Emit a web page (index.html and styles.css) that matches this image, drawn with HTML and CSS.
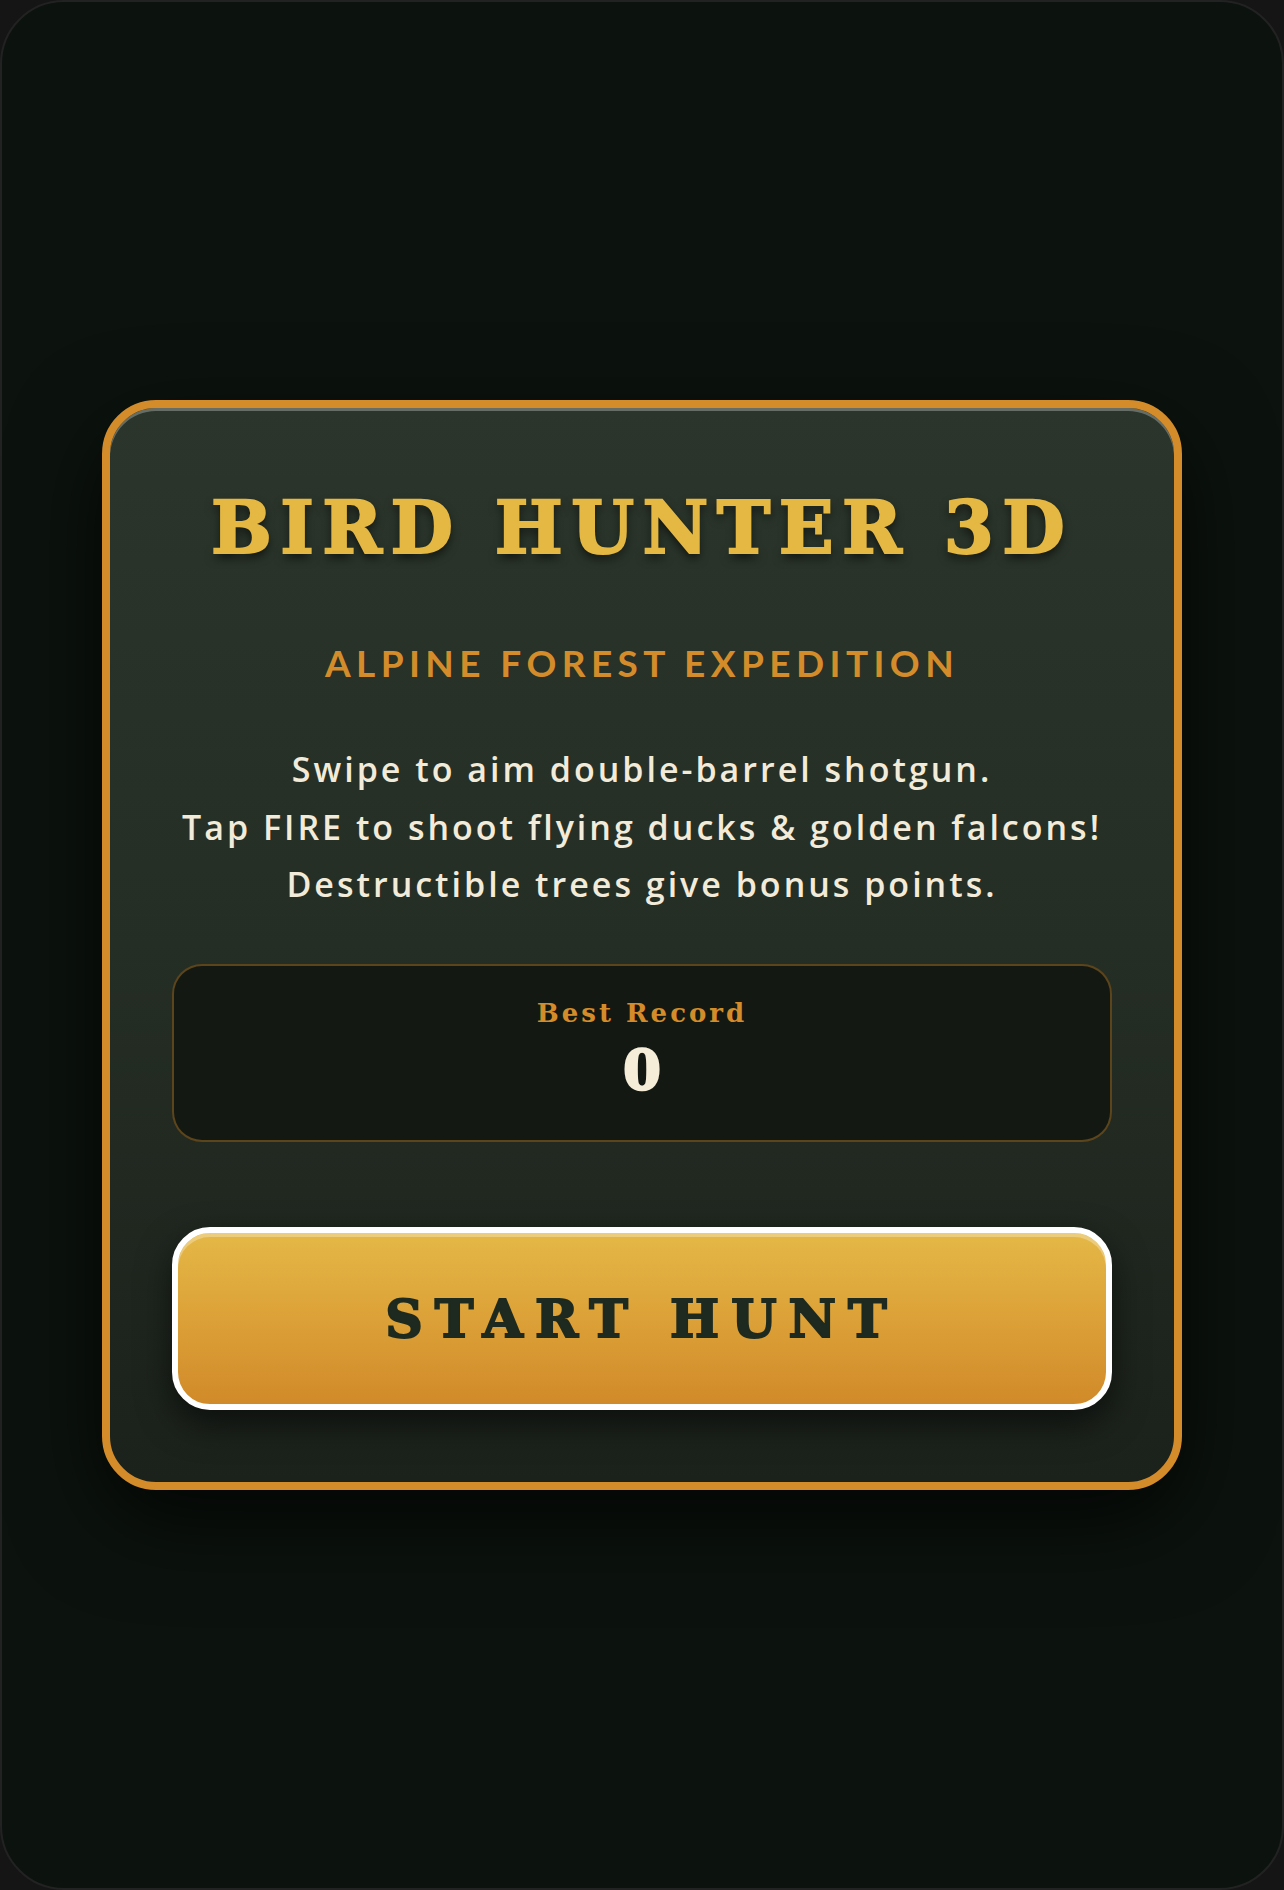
FILE: index.html
```html
<!DOCTYPE html>
<html lang="en">
<head>
<meta charset="utf-8">
<title>Bird Hunter 3D</title>
<link rel="stylesheet" href="styles.css">
</head>
<body>
<div class="screen">
  <div class="card">
    <h1 class="title">BIRD HUNTER 3D</h1>
    <h2 class="subtitle">ALPINE FOREST EXPEDITION</h2>
    <p class="intro">Swipe to aim double-barrel shotgun.<br>Tap FIRE to shoot flying ducks &amp; golden falcons!<br>Destructible trees give bonus points.</p>
    <div class="record">
      <div class="record-label">Best Record</div>
      <div class="record-value">0</div>
    </div>
    <button class="start-btn" type="button">START HUNT</button>
  </div>
</div>
</body>
</html>
```

FILE: styles.css
```css
html, body {
  margin: 0;
  padding: 0;
  background: #151515;
}

.screen {
  box-sizing: border-box;
  width: 1284px;
  height: 1890px;
  border: 2px solid #222222;
  border-radius: 64px;
  background: #0c130e;
  display: flex;
  align-items: center;
  justify-content: center;
}

.card {
  box-sizing: border-box;
  width: 1080px;
  border: 8px solid #d48c2a;
  border-radius: 54px;
  padding: 84px 62px 72px;
  background: linear-gradient(180deg, #2b352b 0%, #252e25 50%, #1b211b 100%);
  box-shadow: inset 0 3px 0 rgba(255, 255, 255, 0.28), 0 30px 90px rgba(0, 0, 0, 0.75);
  display: flex;
  flex-direction: column;
  align-items: center;
  text-align: center;
}

.title {
  margin: 0;
  font-family: "DejaVu Serif", serif;
  font-weight: 700;
  font-size: 72px;
  line-height: 72px;
  letter-spacing: 8.4px;
  color: #e4b843;
  -webkit-text-stroke: 2px #e4b843;
  text-shadow: 0 5px 10px rgba(0, 0, 0, 0.6);
  white-space: nowrap;
}

.subtitle {
  margin: 77px 0 0;
  font-family: Lato, "Liberation Sans", sans-serif;
  font-weight: 700;
  font-size: 37px;
  line-height: 1.2;
  letter-spacing: 5.4px;
  color: #d48c2a;
  white-space: nowrap;
}

.intro {
  margin: 56px 0 0;
  font-family: "Open Sans", Lato, sans-serif;
  font-weight: 600;
  font-size: 34px;
  line-height: 57.5px;
  letter-spacing: 3px;
  color: #f3ebd9;
  white-space: nowrap;
}

.record {
  box-sizing: border-box;
  width: 100%;
  margin-top: 50px;
  border: 2px solid rgba(212, 140, 42, 0.38);
  border-radius: 30px;
  background: #131912;
  padding: 32px 0 40px;
  display: flex;
  flex-direction: column;
  align-items: center;
}

.record-label {
  font-family: "DejaVu Serif", serif;
  font-weight: 700;
  font-size: 26px;
  line-height: 1.2;
  letter-spacing: 3px;
  color: #d48c2a;
}

.record-value {
  margin-top: 12px;
  font-family: "DejaVu Serif", serif;
  font-weight: 700;
  font-size: 54px;
  line-height: 1.1;
  color: #f5edd8;
  -webkit-text-stroke: 2.5px #f5edd8;
}

.start-btn {
  box-sizing: border-box;
  width: 100%;
  height: 183px;
  margin-top: 85px;
  border: 6px solid #ffffff;
  border-radius: 38px;
  background: linear-gradient(180deg, #e4b846 0%, #dca138 50%, #d18a29 100%);
  box-shadow: inset 0 4px 0 rgba(255, 255, 255, 0.3), 0 14px 34px rgba(0, 0, 0, 0.55);
  font-family: "DejaVu Serif", serif;
  font-weight: 700;
  font-size: 52px;
  letter-spacing: 12px;
  color: #1e2a1f;
  -webkit-text-stroke: 2px #1e2a1f;
  padding: 0;
  cursor: pointer;
}
```
